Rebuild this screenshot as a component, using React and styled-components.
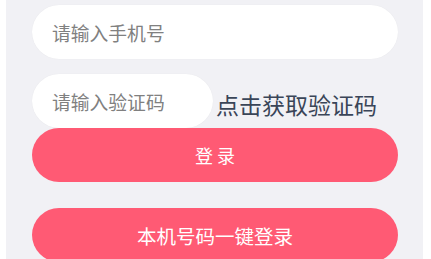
import React from "react";
import styled, { createGlobalStyle } from "styled-components";

const Global = createGlobalStyle`
  html, body {
    margin: 0;
    padding: 0;
    background: #ffffff;
    font-family: "Noto Sans CJK SC", "Noto Sans", sans-serif;
  }
`;

const Panel = styled.div`
  margin: 0 8px 0 6px;
  height: 259px;
  overflow: hidden;
  background: #f1f1f5;
  padding: 5px 0 0 26px;
  box-sizing: border-box;
  display: flex;
  flex-direction: column;
`;

const Field = styled.div`
  width: ${({ $w }) => $w}px;
  height: 54px;
  border-radius: 27px;
  background: #ffffff;
  box-shadow: 0 0 1px rgba(0, 0, 0, 0.08);
  box-sizing: border-box;
  padding-left: 20px;
  display: flex;
  align-items: center;
  font-size: 18.8px;
  color: #808080;
  flex-shrink: 0;
`;

const CodeRow = styled.div`
  display: flex;
  align-items: center;
  margin-top: 15px;
`;

const GetCode = styled.span`
  margin-left: 3px;
  margin-top: 5px;
  font-size: 23px;
  color: #3a4558;
`;

const Button = styled.div`
  width: 366px;
  height: 54px;
  border-radius: 27px;
  background: #ff5a74;
  color: #ffffff;
  font-size: ${({ $size }) => $size}px;
  display: flex;
  align-items: center;
  justify-content: center;
  margin-top: ${({ $gap }) => $gap}px;
  flex-shrink: 0;
  white-space: pre;
`;

export default function App() {
  return (
    <>
      <Global />
      <Panel>
        <Field $w={366}>请输入手机号</Field>
        <CodeRow>
          <Field $w={181}>请输入验证码</Field>
          <GetCode>点击获取验证码</GetCode>
        </CodeRow>
        <Button $gap={0} $size={18}>登 录</Button>
        <Button $gap={26} $size={19.5}>本机号码一键登录</Button>
      </Panel>
    </>
  );
}
